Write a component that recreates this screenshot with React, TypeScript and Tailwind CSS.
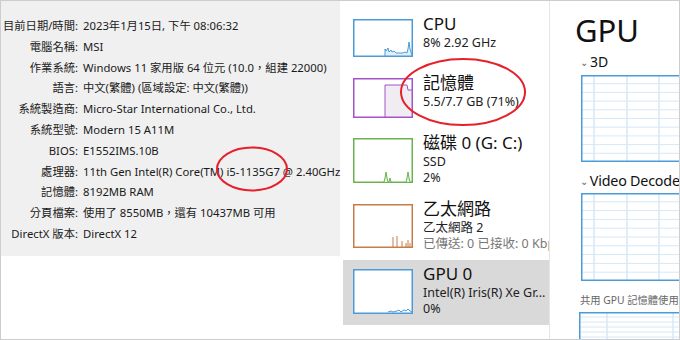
import React from 'react';

const rows: [string, string][] = [
  ['目前日期/時間:', '2023年1月15日, 下午 08:06:32'],
  ['電腦名稱:', 'MSI'],
  ['作業系統:', 'Windows 11 家用版 64 位元 (10.0，組建 22000)'],
  ['語言:', '中文(繁體) (區域設定: 中文(繁體))'],
  ['系統製造商:', 'Micro-Star International Co., Ltd.'],
  ['系統型號:', 'Modern 15 A11M'],
  ['BIOS:', 'E1552IMS.10B'],
  ['處理器:', '11th Gen Intel(R) Core(TM) i5-1135G7 @ 2.40GHz'],
  ['記憶體:', '8192MB RAM'],
  ['分頁檔案:', '使用了 8550MB，還有 10437MB 可用'],
  ['DirectX 版本:', 'DirectX 12'],
];

function Thumb({ h, color, children }: { h: number; color: string; children?: React.ReactNode }) {
  return (
    <svg width={60} height={h} viewBox={`0 0 60 ${h}`} className="shrink-0 block">
      <rect x={0.75} y={0.75} width={58.5} height={h - 1.5} fill="white" stroke={color} strokeWidth={1.5} />
      {children}
    </svg>
  );
}

function Grid({ w, h, cols, rowsN }: { w: number; h: number; cols: number[]; rowsN: number }) {
  const hs = Array.from({ length: rowsN - 1 }, (_, i) => ((i + 1) * h) / rowsN);
  return (
    <svg width={w} height={h} className="block shrink-0">
      <rect x={0} y={0} width={w} height={h} fill="white" />
      {hs.map((y) => (
        <line key={y} x1={0} x2={w} y1={y} y2={y} stroke="#d7e8f6" strokeWidth={1} />
      ))}
      {cols.map((x) => (
        <line key={x} x1={x} x2={x} y1={0} y2={h} stroke="#d7e8f6" strokeWidth={1.5} />
      ))}
      <rect x={0.75} y={0.75} width={w + 10} height={h - 1.5} fill="none" stroke="#4a9bd8" strokeWidth={1.5} />
    </svg>
  );
}

function Item({ title, lines, thumb, h }: { title: string; lines: React.ReactNode[]; thumb: React.ReactNode; h: string }) {
  return (
    <div className={`flex gap-[10px] pl-[10px] ${h}`}>
      <div className="pt-[6px]">{thumb}</div>
      <div className="flex flex-col min-w-0 whitespace-nowrap">
        <div className="text-[17px] leading-[22px] text-[#111]">{title}</div>
        {lines.map((l, i) => (
          <div key={i} className="text-[12.5px] leading-[16px] text-[#222]">{l}</div>
        ))}
      </div>
    </div>
  );
}

export default function App() {
  return (
    <div
      className="relative w-[680px] h-[340px] flex border border-[#cdcdcd] bg-white overflow-hidden"
      style={{ fontFamily: '"Noto Sans", "Noto Sans CJK TC", sans-serif' }}
    >
      {/* system info */}
      <div className="w-[339px] shrink-0 flex flex-col">
        <div className="h-[255px] bg-[#f0f0f0] pt-[15px]">
          <div className="grid grid-cols-[77px_1fr] gap-x-[5px] text-[11.3px] leading-[20.8px] text-[#1a1a1a]">
            {rows.map(([k, v]) => (
              <React.Fragment key={k}>
                <div className="text-right whitespace-nowrap">{k}</div>
                <div className="whitespace-nowrap">{v}</div>
              </React.Fragment>
            ))}
          </div>
        </div>
        <div className="flex-1 bg-white" />
      </div>

      {/* perf list */}
      <div className="w-[210px] shrink-0 pl-[3px] border-r border-[#e6e6e6] flex flex-col pt-[12px] overflow-hidden">
        <Item
          h="h-[59px]"
          title="CPU"
          lines={['8% 2.92 GHz']}
          thumb={
            <Thumb h={38} color="#4a9bd8">
              <path d="M32 37 L32 30 L33 32 L35 29 L36 33 L38 31 L39 33 L41 32 L43 34 L50 34 L52 33 L54 34 L55 30 L56 23 L57 30 L58 33 L59 37 Z" fill="#e3f0fa" stroke="#4a9bd8" strokeWidth={1} />
            </Thumb>
          }
        />
        <Item
          h="h-[60px]"
          title="記憶體"
          lines={['5.5/7.7 GB (71%)']}
          thumb={
            <Thumb h={40} color="#a452c8">
              <path d="M32 39 L32 7 L54 7 L55 12 L59 12 L59 39 Z" fill="#f0edf2" stroke="#a452c8" strokeWidth={1} />
            </Thumb>
          }
        />
        <Item
          h="h-[66px]"
          title="磁碟 0 (G: C:)"
          lines={['SSD', '2%']}
          thumb={
            <Thumb h={45} color="#6bb24e">
              <path d="M31 44 L32 40 L33 34 L34 40 L35 44 M36 44 L37 40 L38 44 M53 44 L54 40 L55 34 L56 40 L57 44" fill="#e6f3df" stroke="#6bb24e" strokeWidth={1} />
            </Thumb>
          }
        />
        <Item
          h="h-[62px]"
          title="乙太網路"
          lines={['乙太網路 2', <span className="text-[#777]">已傳送: 0 已接收: 0 Kbps</span>]}
          thumb={
            <Thumb h={44} color="#c47d48">
              <path d="M40 43 L40 33 M44 43 L44 32 M49 43 L49 37 M53 43 L53 39 M55 43 L55 36 M57 43 L57 39" fill="none" stroke="#c47d48" strokeWidth={1} />
            </Thumb>
          }
        />
        <div className="bg-[#d9d9d9] pt-[3px] h-[65px]">
          <Item
            h="h-[62px]"
            title="GPU 0"
            lines={['Intel(R) Iris(R) Xe Gr...', '0%']}
            thumb={
              <Thumb h={45} color="#4a9bd8">
                <path d="M35 43 L38 42 L40 43 L44 42 L46 41 L48 43 L51 41 L53 42 L55 40 L57 42 L59 43" fill="none" stroke="#4a9bd8" strokeWidth={1} />
              </Thumb>
            }
          />
        </div>
      </div>

      {/* gpu detail */}
      <div className="flex-1 min-w-0 overflow-hidden pl-[25px] pt-[10px] text-[#111] whitespace-nowrap">
        <div className="text-[31px] leading-[38px]">GPU</div>
        <div className="flex items-center gap-[2px] mt-[4px] pl-[5px] text-[14px] leading-[18px]">
          <span className="text-[10px] text-[#666]">⌄</span>3D
        </div>
        <div className="pl-[6px] mt-[4px]">
          <Grid w={130} h={87} cols={[13, 46, 78]} rowsN={10} />
        </div>
        <div className="flex items-center gap-[2px] mt-[9px] pl-[5px] text-[14.3px] leading-[20px] tracking-[-0.2px]">
          <span className="text-[10px] text-[#666]">⌄</span>Video Decode
        </div>
        <div className="pl-[6px] mt-[2px]">
          <Grid w={130} h={88} cols={[13, 46, 78]} rowsN={10} />
        </div>
        <div className="pl-[5px] mt-[12px] text-[10.3px] leading-[14px] text-[#666]">共用 GPU 記憶體使用</div>
        <div className="pl-[4px] mt-[5px]">
          <Grid w={130} h={40} cols={[28, 94]} rowsN={8} />
        </div>
      </div>

      {/* red annotations */}
      <svg className="absolute left-0 top-0 pointer-events-none" width={680} height={340}>
        <ellipse cx={251} cy={168} rx={35} ry={21.5} fill="none" stroke="#e5202a" strokeWidth={2} />
        <ellipse cx={462} cy={91} rx={62} ry={33} fill="none" stroke="#e5202a" strokeWidth={2} />
      </svg>
    </div>
  );
}
